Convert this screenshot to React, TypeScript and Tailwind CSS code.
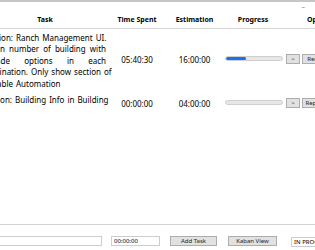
import type { ReactNode } from 'react'

type Line = { lead: string; leadWidth: number; words: string[]; justify: boolean }

const tasks: { lines: Line[]; spent: string; estimate: string; progress: number }[] = [
  {
    lines: [
      { lead: 'Automation:', leadWidth: 13, words: ['Ranch', 'Management', 'UI.'], justify: true },
      { lead: 'Certain', leadWidth: 5, words: ['number', 'of', 'building', 'with'], justify: true },
      { lead: 'Upgrade', leadWidth: 10, words: ['options', 'in', 'each'], justify: true },
      { lead: 'Combination.', leadWidth: 28, words: ['Only', 'show', 'section', 'of'], justify: true },
      { lead: 'Available', leadWidth: 13, words: ['Automation'], justify: false },
    ],
    spent: '05:40:30',
    estimate: '16:00:00',
    progress: 36,
  },
  {
    lines: [
      { lead: 'Automation:', leadWidth: 12, words: ['Building', 'Info', 'in', 'Building'], justify: true },
      { lead: 'UI', leadWidth: 0, words: [], justify: false },
    ],
    spent: '00:00:00',
    estimate: '04:00:00',
    progress: 0,
  },
]

function TaskLine({ line }: { line: Line }) {
  return (
    <div
      className={`flex h-[11.5px] items-center gap-[3px] whitespace-nowrap ${
        line.justify ? 'justify-between' : ''
      }`}
    >
      <span className="flex shrink-0 justify-end" style={{ width: line.leadWidth }}>
        {line.lead}
      </span>
      {line.words.map((w, i) => (
        <span key={i}>{w}</span>
      ))}
    </div>
  )
}

function SmallButton({ children, className = '' }: { children: ReactNode; className?: string }) {
  return (
    <button
      type="button"
      className={`flex h-[10px] shrink-0 items-center justify-center border border-[#adadad] bg-[#e1e1e1] text-[6px] leading-none text-[#222] ${className}`}
    >
      {children}
    </button>
  )
}

export default function App() {
  return (
    <div className="flex h-[250px] w-[315px] flex-col overflow-hidden bg-white font-['Noto_Sans',sans-serif] text-black">
      <div className="h-[2px] shrink-0 bg-[#c6c6c6]" />
      <div className="flex h-[8px] shrink-0 items-center justify-end pr-[10px] text-[7px] leading-none text-[#888]">
        –
      </div>

      {/* header */}
      <div className="grid h-[19px] shrink-0 grid-cols-[113px_48px_64px_60px_minmax(0,1fr)] items-center border-b border-[#d6d6d6] text-[7px] font-bold leading-none whitespace-nowrap">
        <div className="pr-[23px] text-center">Task</div>
        <div className="text-center">Time Spent</div>
        <div className="pl-[3px] text-center">Estimation</div>
        <div className="pr-[4px] text-center">Progress</div>
        <div className="pl-[22px]">Options</div>
      </div>

      {tasks.map((t, i) => (
        <div
          key={i}
          className={`grid shrink-0 grid-cols-[113px_48px_64px_60px_minmax(0,1fr)] items-center text-[8px] ${
            i === 0 ? 'h-[62px]' : 'h-[24px]'
          }`}
        >
          <div className={`self-start pr-[7px] ${i === 0 ? 'pt-[3px]' : 'pt-[3px]'}`}>
            {t.lines.map((l, j) => (
              <TaskLine key={j} line={l} />
            ))}
          </div>
          <div className="text-center">{t.spent}</div>
          <div className="pl-[3px] text-center">{t.estimate}</div>
          <div className="pb-[3px]">
            <div className="h-[5px] w-[58px] overflow-hidden rounded-full border border-[#cfcfcf] bg-[#e6e6e6]">
              <div className="h-full rounded-full bg-[#1672ee]" style={{ width: `${t.progress}%` }} />
            </div>
          </div>
          <div className="flex gap-[2px] pb-[3px] pl-[1px]">
            <SmallButton className="w-[14px]">&gt;</SmallButton>
            <SmallButton className="w-[26px]">{i === 0 ? 'Reset' : 'Report'}</SmallButton>
          </div>
        </div>
      ))}

      <div className="flex-1" />

      {/* footer */}
      <div className="h-[26px] shrink-0 border-t border-[#d2d2d2] pt-[9px]">
        <div className="flex items-center whitespace-nowrap text-[6px] leading-none">
          <div className="-ml-[2px] h-[10px] w-[104px] shrink-0 border border-[#cdcdcd] bg-white" />
          <div className="ml-[9px] flex h-[10px] w-[49px] shrink-0 items-center border border-[#cdcdcd] pl-[2px]">
            00:00:00
          </div>
          <SmallButton className="ml-[10px] w-[47px]">Add Task</SmallButton>
          <SmallButton className="ml-[11px] w-[49px]">Kaban View</SmallButton>
          <div className="ml-[14px] mt-[3px] flex h-[10px] w-[40px] shrink-0 items-center border border-[#cdcdcd] pl-[2px]">
            IN PROGRESS
          </div>
        </div>
      </div>
    </div>
  )
}
